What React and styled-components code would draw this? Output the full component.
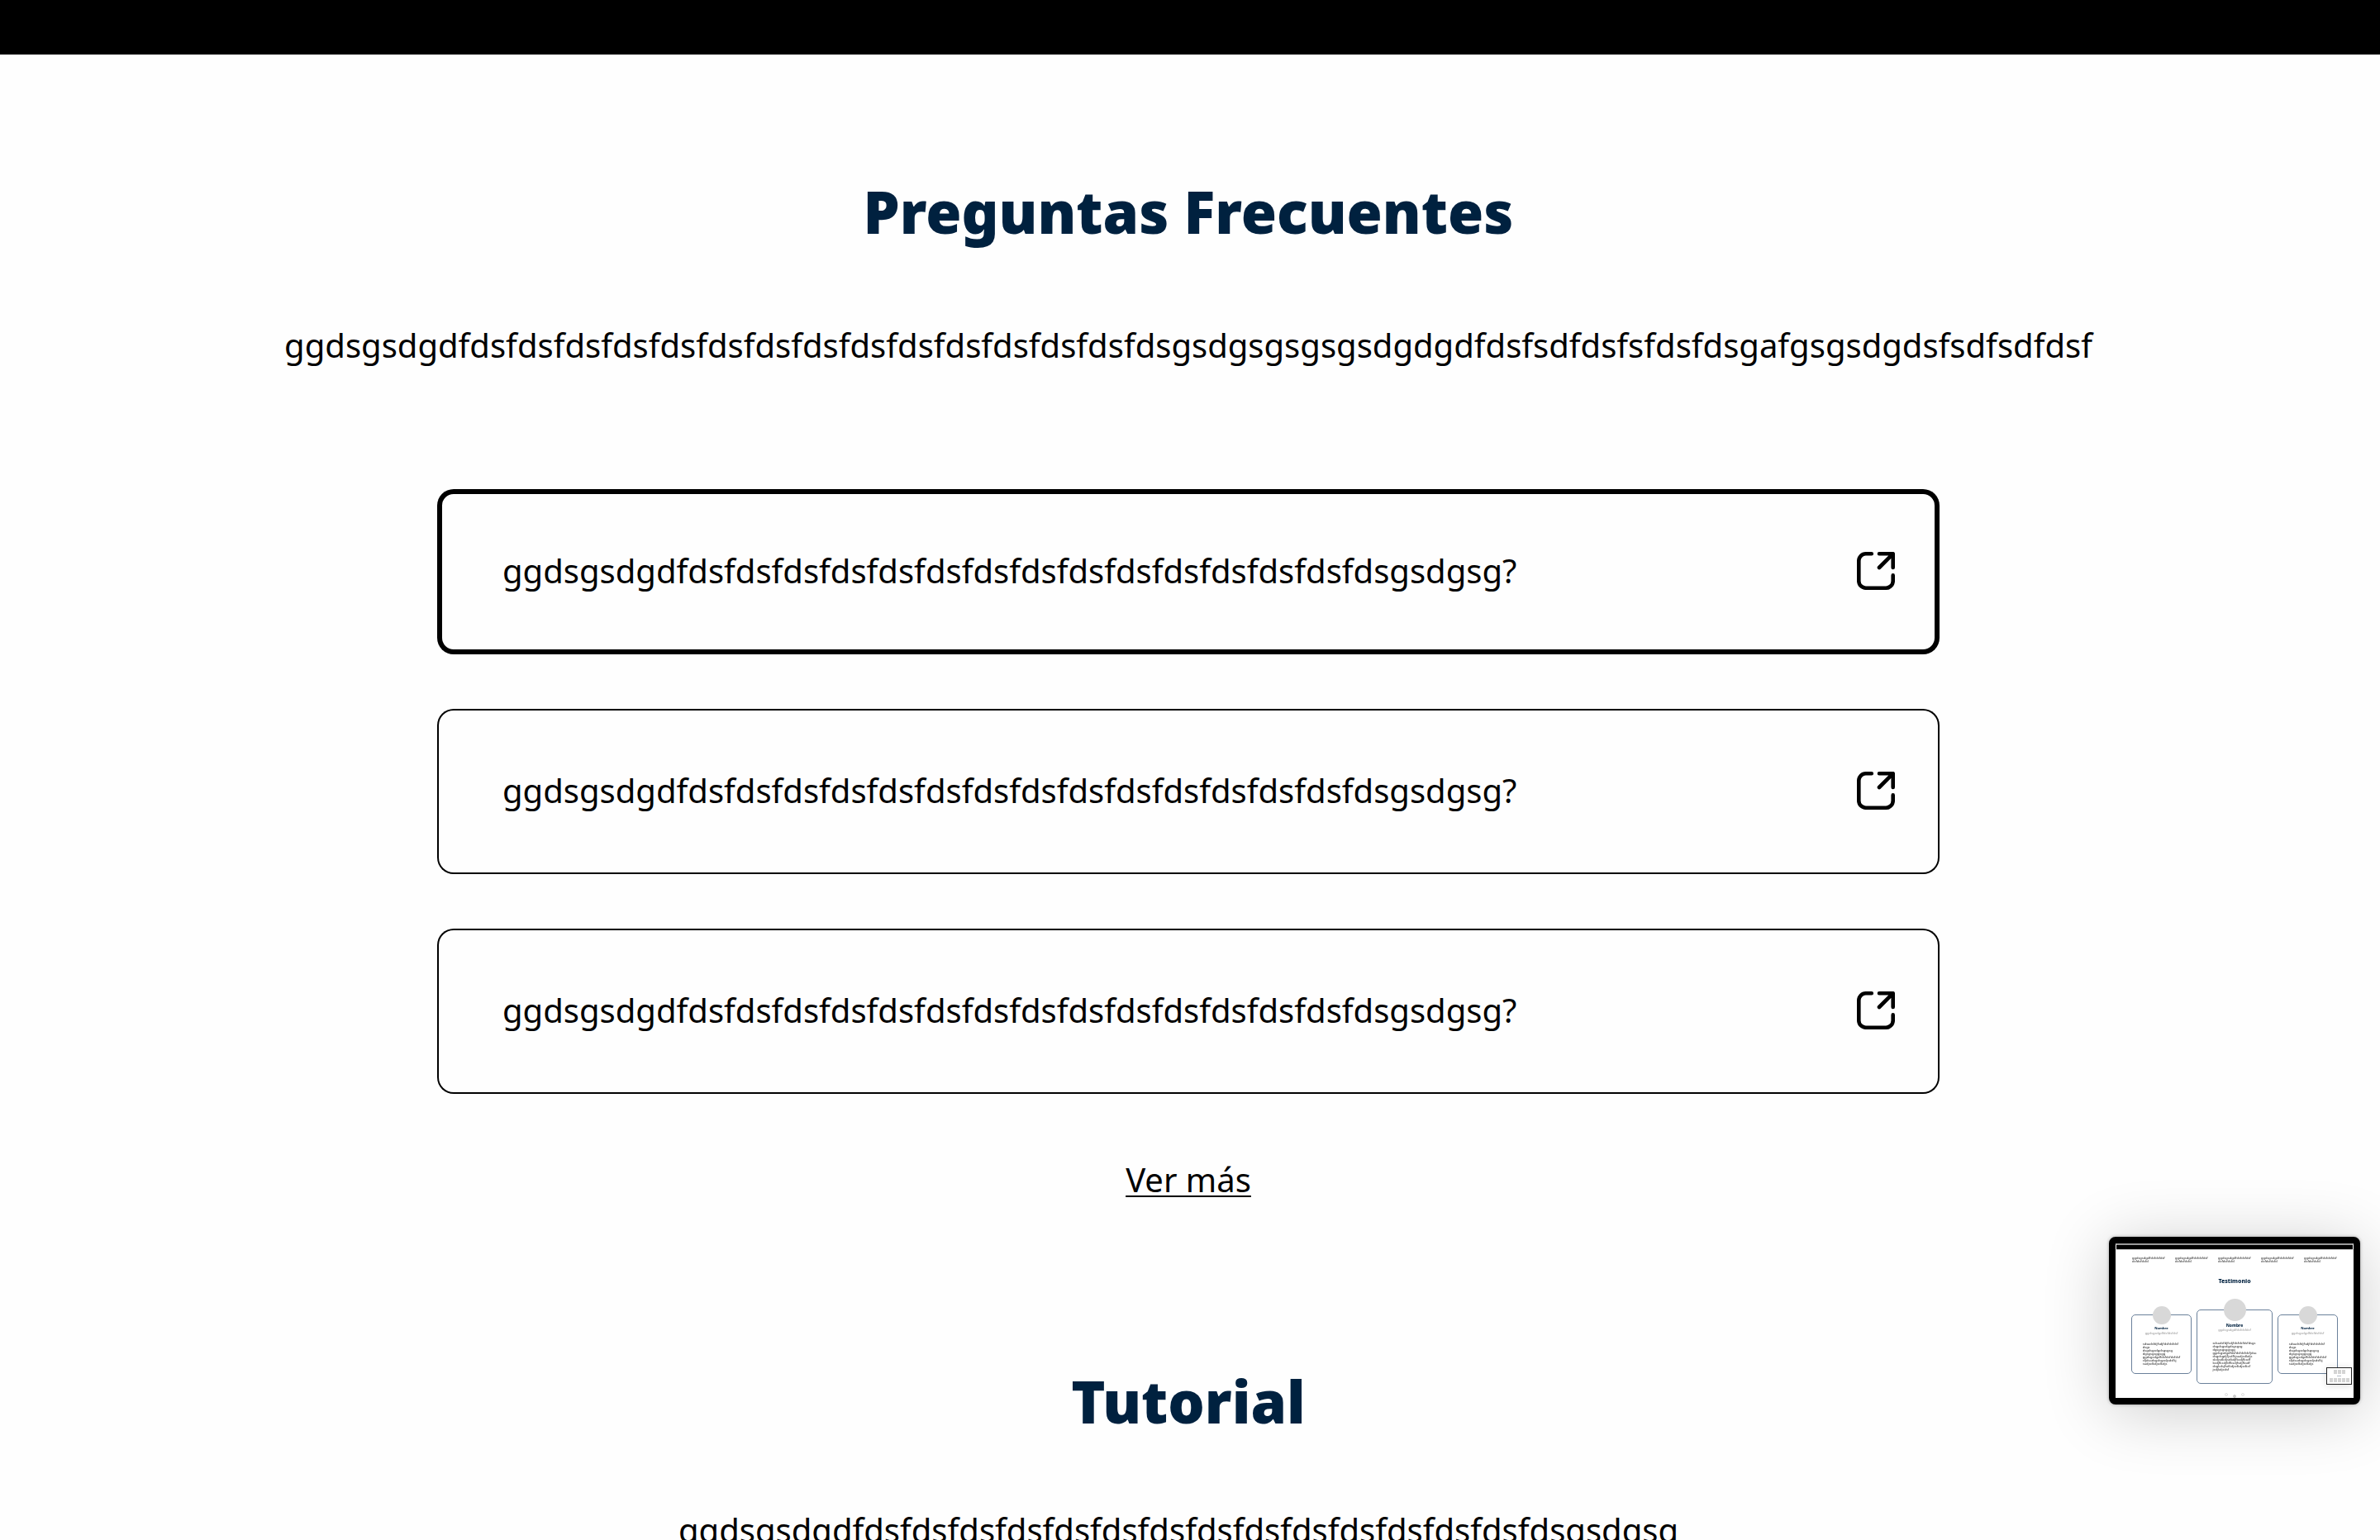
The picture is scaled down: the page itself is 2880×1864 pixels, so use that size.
import React from "react";
import styled, { createGlobalStyle } from "styled-components";

const GlobalStyle = createGlobalStyle`
  *, *::before, *::after { box-sizing: border-box; }
  html, body { margin: 0; height: 100%; }
  #root { height: 100%; }
  body {
    background: #fefefe;
    color: #000;
    font-family: "Noto Sans", "Open Sans", sans-serif;
    font-size: 40px;
    line-height: 60px;
    overflow: hidden;
  }
  h1, h2, h3, p, ul { margin: 0; padding: 0; }
  ul { list-style: none; }
`;

const Page = styled.div`
  height: 100%;
  overflow: hidden;
`;

const TopBar = styled.header`
  height: 66px;
  background: #000;
`;

const Section = styled.section`
  display: flex;
  flex-direction: column;
  align-items: center;
  padding: ${(p) => p.$top}px 36px 0 32px;
`;

const Title = styled.h2`
  color: #00213f;
  font-family: "Noto Sans", "Open Sans", sans-serif;
  font-size: 70px;
  line-height: 100px;
  font-weight: 900;
  text-align: center;
`;

const Lead = styled.p`
  margin-top: ${(p) => p.$gap}px;
  padding-right: ${(p) => p.$end || 0}px;
  white-space: nowrap;
`;

const Questions = styled.ul`
  display: flex;
  flex-direction: column;
  gap: 66px;
  width: 100%;
  max-width: 1818px;
  margin-top: 144px;
`;

const Question = styled.button`
  display: flex;
  align-items: center;
  justify-content: space-between;
  width: 100%;
  padding: 69px 54px 71px 79px;
  border: 0;
  border-radius: 20px;
  box-shadow: inset 0 0 0 ${(p) => (p.$active ? 6 : 2)}px #000;
  background: transparent;
  color: inherit;
  font: inherit;
  text-align: left;
  cursor: pointer;
`;

const MoreLink = styled.a`
  margin-top: 74px;
  color: inherit;
  text-decoration: underline;
  text-decoration-thickness: 2px;
  text-underline-offset: 4px;
`;

const Preview = styled.aside`
  position: fixed;
  right: 24px;
  bottom: 164px;
  display: flex;
  flex-direction: column;
  width: 304px;
  height: 203px;
  border: 8px solid #000;
  border-radius: 8px;
  background: #fff;
  box-shadow: 0 0 4px rgba(0, 0, 0, 0.3), 0 8px 80px rgba(0, 0, 0, 0.2);
  font-size: 4px;
  line-height: 4px;
  color: #222;
`;

const PreviewBar = styled.div`
  height: 8px;
  border: solid #fff;
  border-width: 0 1px;
  border-top: 2px solid #999;
  border-bottom: 1px solid #ccc;
  background: #000;
`;

const PreviewColumns = styled.div`
  display: flex;
  gap: 12px;
  padding: 8px 20px 0;
`;

const PreviewColumn = styled.p`
  width: 40px;
  white-space: pre;
`;

const PreviewTitle = styled.h3`
  margin-top: 17px;
  color: #00213f;
  font-size: 7px;
  line-height: 10px;
  font-weight: 800;
  text-align: center;
`;

const PreviewCards = styled.div`
  display: flex;
  justify-content: center;
  align-items: flex-start;
  gap: 6px;
  margin-top: 29px;
`;

const PreviewCard = styled.div`
  display: flex;
  flex-direction: column;
  align-items: center;
  width: ${(p) => (p.$large ? 92 : 73)}px;
  height: ${(p) => (p.$large ? 90 : 72)}px;
  margin-top: ${(p) => (p.$large ? 0 : 6)}px;
  border: 1px solid #6b819b;
  border-radius: 5px;
`;

const Avatar = styled.div`
  flex: none;
  width: ${(p) => (p.$large ? 27 : 22)}px;
  height: ${(p) => (p.$large ? 27 : 22)}px;
  margin-top: ${(p) => (p.$large ? -14 : -11)}px;
  border-radius: 50%;
  background: #d8d8d8;
`;

const PersonName = styled.strong`
  margin-top: 2px;
  color: #00213f;
  font-size: ${(p) => (p.$large ? 5 : 4)}px;
  line-height: 6px;
  font-weight: 800;
`;

const PersonRole = styled.span`
  margin-top: 1px;
  color: #999;
`;

const Quote = styled.p`
  margin-top: ${(p) => (p.$large ? 12 : 9)}px;
  white-space: pre;
`;

const Dots = styled.div`
  display: flex;
  justify-content: center;
  gap: 6px;
  margin-top: 11px;
`;

const Dot = styled.span`
  width: 4px;
  height: 4px;
  margin-top: ${(p) => (p.$on ? 2 : 0)}px;
  border: 1px solid ${(p) => (p.$on ? "#ccc" : "#ddd")};
  border-radius: 50%;
  background: ${(p) => (p.$on ? "#ccc" : "transparent")};
`;

const NestedPreview = styled.div`
  position: absolute;
  right: 2px;
  bottom: 16px;
  display: flex;
  flex-direction: column;
  align-items: center;
  gap: 2px;
  width: 31px;
  height: 21px;
  padding-top: 2px;
  border: 1px solid #222;
  background: #fff;
  box-shadow: 0 1px 8px rgba(0, 0, 0, 0.15);
`;

const NestedRow = styled.div`
  display: flex;
  gap: 1px;
`;

const Tile = styled.span`
  width: 4px;
  height: 5px;
  background: #d4d4d4;
`;

const NestedRule = styled.span`
  width: 5px;
  height: 1px;
  background: #b5bcc6;
`;

const fds = (n) => "fds".repeat(n);
const shortText = "ggdsgsdgd" + fds(15) + "gsdgsg";
const introText =
  "ggdsgsdgd" + fds(15) + "gsdgsgsgsgsdgdgdfdsfsdfdsfsfdsfdsgafgsgsdgdsfsdfsdfdsf";

const questions = [
  { id: 1, text: shortText + "?", active: true },
  { id: 2, text: shortText + "?", active: false },
  { id: 3, text: shortText + "?", active: false },
];

const sideQuote = [
  "sdsadsfdjfsdjfdsfdsfdsf",
  "dsgs",
  "dsgdsgsdgdsgsgsg",
  "dgsgsgsggsgg",
  "ggdsgsdgdfdsfdsfdsfdsf",
  "sfjdsadsgdsgsdjsdsfkj",
  "sadjsdkdjsdkdjs",
].join("\n");

const mainQuote = [
  "sdsadsfdjfsdjfdsfdsfdsfdsgs",
  "dsgdsgsdgdsgsgsg",
  "dgsgsgsggsgg",
  "ggdsgsdgdfdsfdsfdsfdsfjdsa",
  "dsgdsgdjfjsdfkjsadjsdkdjs",
  "skdjsdkdjsdkdjfksdjfksdf",
  "ksdjfksdjfdfksdjfsdjfksdf",
  "dsgkdsjfsdkdjsdkdjsdksf",
  "jsdjkdjsdsf",
].join("\n");

const people = [
  { id: "a", large: false, quote: sideQuote },
  { id: "b", large: true, quote: mainQuote },
  { id: "c", large: false, quote: sideQuote },
];

function OpenIcon() {
  return (
    <svg
      width="46"
      height="46"
      viewBox="0 0 46 46"
      fill="none"
      stroke="#000"
      strokeWidth="4.6"
      strokeLinecap="round"
      strokeLinejoin="round"
      aria-hidden="true"
    >
      <path d="M17.8 2.3H10.7A8.4 8.4 0 0 0 2.3 10.7V35.3A8.4 8.4 0 0 0 10.7 43.7H35.3A8.4 8.4 0 0 0 43.7 35.3V28.4" />
      <path d="M27 2.3H43.7V19M43.7 2.3L27 19" />
    </svg>
  );
}

function ScreenPreview() {
  return (
    <Preview>
      <PreviewBar />
      <PreviewColumns>
        {[1, 2, 3, 4, 5].map((n) => (
          <PreviewColumn key={n}>{"ggdsgsdgdfdsfdsfdsf\ndsfdsfdsfd"}</PreviewColumn>
        ))}
      </PreviewColumns>
      <PreviewTitle>Testimonio</PreviewTitle>
      <PreviewCards>
        {people.map(({ id, large, quote }) => (
          <PreviewCard key={id} $large={large}>
            <Avatar $large={large} />
            <PersonName $large={large}>Nombre</PersonName>
            <PersonRole>ggdsgsdgdfdsfdsfdsf</PersonRole>
            <Quote $large={large}>{quote}</Quote>
          </PreviewCard>
        ))}
      </PreviewCards>
      <Dots>
        <Dot />
        <Dot $on />
        <Dot />
      </Dots>
      <NestedPreview>
        <NestedRow>
          <Tile /><Tile /><Tile />
        </NestedRow>
        <NestedRule />
        <NestedRow>
          <Tile /><Tile /><Tile /><Tile /><Tile />
        </NestedRow>
      </NestedPreview>
    </Preview>
  );
}

export default function App() {
  return (
    <Page>
      <GlobalStyle />
      <TopBar />
      <main>
        <Section $top={140}>
          <Title>Preguntas Frecuentes</Title>
          <Lead $gap={82}>{introText}</Lead>
          <Questions>
            {questions.map((q) => (
              <li key={q.id}>
                <Question type="button" $active={q.active}>
                  <span>{q.text}</span>
                  <OpenIcon />
                </Question>
              </li>
            ))}
          </Questions>
          <MoreLink href="#preguntas">Ver más</MoreLink>
        </Section>
        <Section $top={188}>
          <Title>Tutorial</Title>
          <Lead $gap={76} $end={24}>{shortText}</Lead>
        </Section>
      </main>
      <ScreenPreview />
    </Page>
  );
}
